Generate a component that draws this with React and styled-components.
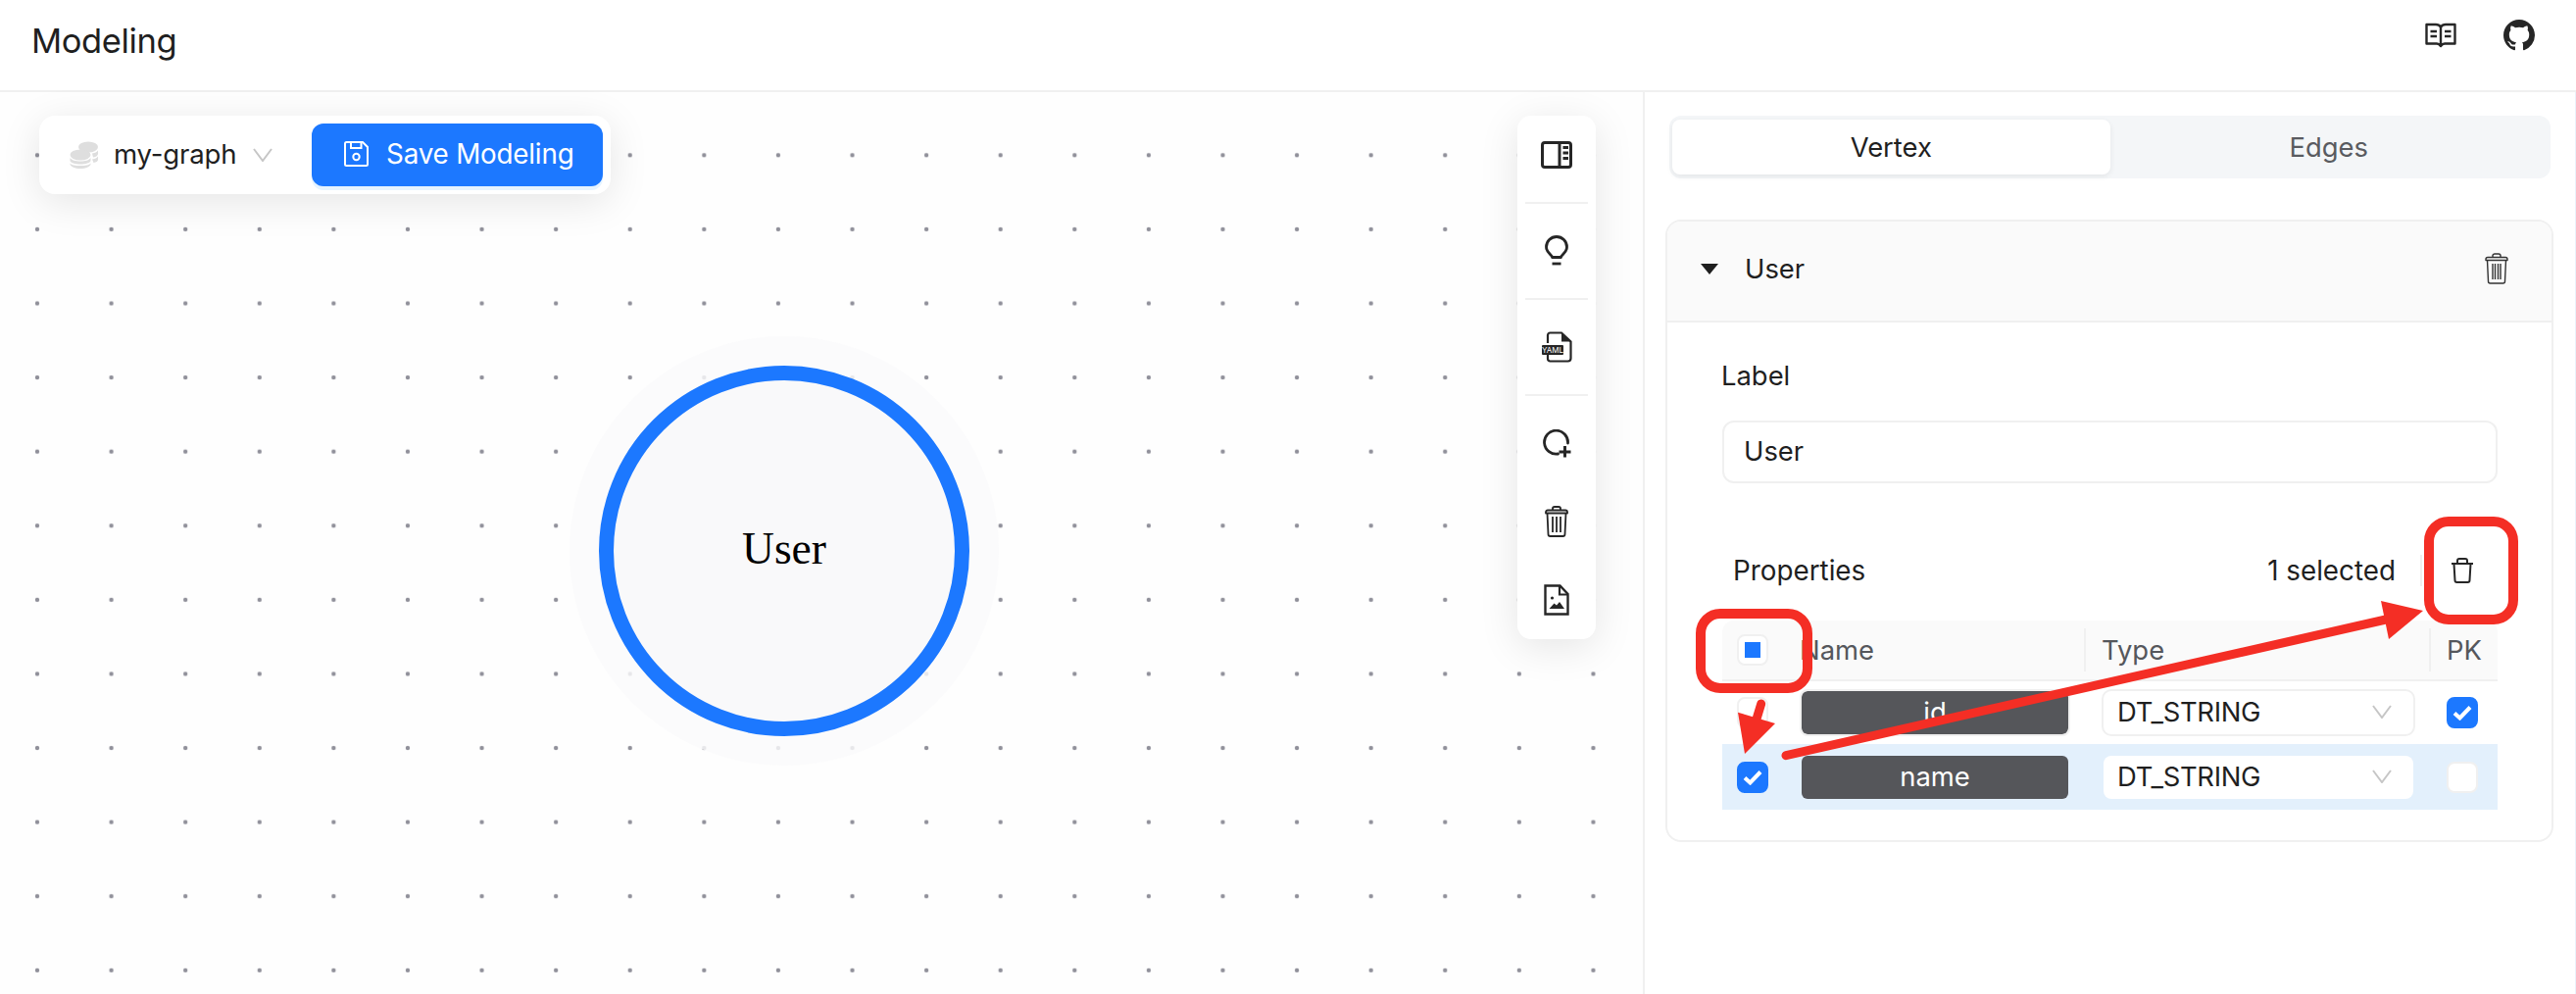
import React from "react";
import styled, { createGlobalStyle } from "styled-components";
import { BsGithub } from "react-icons/bs";

const BLUE = "#1c78ff";
const LINE = "#f0f0f0";
const RED = "#f42e25";

const Global = createGlobalStyle`
  html, body { margin: 0; padding: 0; background: #fff; }
  body { font-family: Inter, "Noto Sans", sans-serif; color: #1f1f1f; }
  * { box-sizing: border-box; }
`;

const Page = styled.div`
  position: relative;
  width: 2628px;
  height: 1014px;
  overflow: hidden;
  display: flex;
  flex-direction: column;
`;
const Header = styled.header`
  height: 94px;
  flex: none;
  border-bottom: 2px solid ${LINE};
  display: flex;
  align-items: flex-start;
  justify-content: space-between;
  padding: 0 42px 0 32px;
`;
const Title = styled.h1`
  margin: 22px 0 0;
  font-size: 34.5px;
  line-height: 40px;
  font-weight: 400;
  letter-spacing: -0.4px;
`;
const HeaderIcons = styled.div`
  display: flex;
  align-items: center;
  gap: 48px;
  height: 72px;
`;
const Main = styled.main`
  flex: 1;
  display: flex;
  min-height: 0;
`;
const Canvas = styled.section`
  position: relative;
  width: 1676px;
  flex: none;
  background-color: #fefefe;
  background-image: radial-gradient(circle at center, #90909a 0, #90909a 1.8px, transparent 2.6px);
  background-size: 75.6px 75.6px;
  background-position: 0.2px 26.5px;
`;
const FloatBar = styled.div`
  position: absolute;
  left: 40px;
  top: 24px;
  width: 583px;
  height: 80px;
  background: #fff;
  border-radius: 16px;
  box-shadow: 0 8px 40px rgba(0, 0, 0, 0.1);
  display: flex;
  align-items: center;
  padding: 0 8px 0 31px;
`;
const GraphName = styled.span`
  font-size: 27.6px;
  margin-left: 15px;
  letter-spacing: -0.2px;
  padding-bottom: 2px;
`;
const ChevronSlot = styled.span`
  margin-left: 17px;
  display: flex;
`;
const SaveButton = styled.button`
  margin-left: auto;
  width: 297px;
  height: 64px;
  border: 0;
  border-radius: 12px;
  background: ${BLUE};
  box-shadow: 0 4px 0 #e6f4ff;
  color: #fff;
  font: 400 27.8px Inter, sans-serif;
  letter-spacing: -0.2px;
  display: flex;
  align-items: center;
  padding: 0 0 2px 33px;
  gap: 18px;
`;
const SideTools = styled.div`
  position: absolute;
  right: 48px;
  top: 24px;
  width: 80px;
  background: #fff;
  border-radius: 14px;
  box-shadow: 0 8px 40px rgba(0, 0, 0, 0.1);
  display: flex;
  flex-direction: column;
  align-items: center;
`;
const ToolButton = styled.div`
  width: 80px;
  height: 80px;
  display: flex;
  align-items: center;
  justify-content: center;
`;
const ToolDivider = styled.div`
  width: 64px;
  height: 2px;
  margin: 8px 0;
  background: ${LINE};
`;
const Node = styled.div`
  position: absolute;
  left: 611px;
  top: 279px;
  width: 378px;
  height: 378px;
  border-radius: 50%;
  border: 15px solid ${BLUE};
  background: #f9f9fa;
  box-shadow: 0 0 0 30px rgba(250, 250, 251, 0.82);
  display: flex;
  align-items: center;
  justify-content: center;
  padding-bottom: 6px;
  font-family: "Liberation Serif", serif;
  font-size: 45.5px;
  color: #000;
`;
const Panel = styled.aside`
  flex: 1;
  border-left: 2px solid ${LINE};
  border-right: 1px solid #eaf2fb;
  padding: 24px 22px 0 21px;
`;
const Segmented = styled.div`
  margin: 0 3px 0 4px;
  height: 64px;
  padding: 4px 3px;
  border-radius: 12px;
  background: #f4f6f8;
  display: grid;
  grid-template-columns: 1fr 1fr;
`;
const Segment = styled.div`
  border-radius: 8px;
  display: flex;
  align-items: center;
  justify-content: center;
  font-size: 27.4px;
  color: ${(p) => (p.$active ? "#1f1f1f" : "#595b60")};
  background: ${(p) => (p.$active ? "#fff" : "transparent")};
  box-shadow: ${(p) => (p.$active ? "0 2px 6px rgba(0,0,0,0.07)" : "none")};
`;
const Card = styled.div`
  margin-top: 42px;
  border: 2px solid ${LINE};
  border-radius: 16px;
  overflow: hidden;
`;
const CardHead = styled.div`
  height: 103px;
  background: #fafafa;
  border-bottom: 2px solid ${LINE};
  display: flex;
  align-items: center;
  padding: 0 44px 5px 34px;
  font-size: 27.4px;
`;
const Caret = styled.span`
  width: 0;
  height: 0;
  border-left: 9px solid transparent;
  border-right: 9px solid transparent;
  border-top: 11px solid #1f1f1f;
  margin-right: 27px;
`;
const Push = styled.span`
  margin-left: auto;
  display: flex;
`;
const CardBody = styled.div`
  padding: 32px 55px 31px 56px;
`;
const FieldLabel = styled.div`
  font-size: 27.4px;
  line-height: 44px;
  margin-bottom: 24px;
  margin-left: -1px;
`;
const TextField = styled.div`
  height: 64px;
  border: 2px solid ${LINE};
  border-radius: 12px;
  padding: 0 0 2px 20px;
  display: flex;
  align-items: center;
  font-size: 27.4px;
`;
const PropBar = styled.div`
  margin-top: 65px;
  height: 50px;
  display: flex;
  align-items: center;
  padding: 0 24px 2px 11px;
  font-size: 27.8px;
`;
const Count = styled.span`
  margin-left: auto;
`;
const BarRule = styled.span`
  width: 2px;
  height: 32px;
  background: ${LINE};
  margin: 0 29px 0 25px;
`;
const Table = styled.div`
  margin-top: 25px;
  display: grid;
  grid-template-columns: 65px 306px 352px 68px;
`;
const HeadCell = styled.div`
  position: relative;
  height: 62px;
  background: #fafafa;
  border-bottom: 2px solid ${LINE};
  display: flex;
  align-items: center;
  padding-left: ${(p) => (p.$check ? "15px" : p.$tight ? "14px" : "16px")};
  font-size: 27.4px;
  color: #55575c;
  border-top-left-radius: ${(p) => (p.$first ? "12px" : "0")};
  border-top-right-radius: ${(p) => (p.$last ? "12px" : "0")};
  &::after {
    content: "";
    display: ${(p) => (p.$rule ? "block" : "none")};
    position: absolute;
    right: 0;
    top: 8px;
    width: 2px;
    height: 44px;
    background: ${LINE};
  }
`;
const Cell = styled.div`
  height: ${(p) => (p.$selected ? "67px" : "64px")};
  background: ${(p) => (p.$selected ? "#e3f0fc" : "#fff")};
  display: flex;
  align-items: center;
  padding-left: ${(p) => p.$pad || "16px"};
`;
const Check = styled.span`
  width: 32px;
  height: 32px;
  border-radius: 8px;
  border: 2px solid ${(p) => (p.$on ? BLUE : LINE)};
  background: ${(p) => (p.$on ? BLUE : "#fff")};
  display: flex;
  align-items: center;
  justify-content: center;
`;
const Indeterminate = styled.span`
  width: 16px;
  height: 16px;
  background: ${BLUE};
`;
const NameField = styled.div`
  width: 276px;
  height: 48px;
  border: 2px solid ${(p) => (p.$selected ? "transparent" : LINE)};
  border-radius: 8px;
  background: #55565a;
  background-clip: padding-box;
  color: #fff;
  display: flex;
  align-items: center;
  justify-content: center;
  font-size: 27.4px;
  padding-bottom: 2px;
`;
const TypeSelect = styled.div`
  width: 320px;
  height: 48px;
  border: 2px solid ${(p) => (p.$selected ? "transparent" : LINE)};
  border-radius: 10px;
  background: #fff;
  background-clip: padding-box;
  display: flex;
  align-items: center;
  justify-content: space-between;
  padding: 0 22px 2px 14px;
  font-size: 27.4px;
  letter-spacing: -0.3px;
`;
const Annotations = styled.svg`
  position: absolute;
  left: 0;
  top: 0;
  pointer-events: none;
`;

const Chevron = ({ w = 20, h = 14, c = "#c6c6c6" }) => (
  <svg width={w} height={h} viewBox="0 0 20 14" fill="none" preserveAspectRatio="none">
    <path d="M1 1 L10 13 L19 1" stroke={c} strokeWidth="2" />
  </svg>
);

const BookIcon = () => (
  <svg width="32" height="26" viewBox="0 0 32 26" fill="none" stroke="#262626" strokeWidth="2.4">
    <path d="M1.5 2 H11 C13.5 2 15 3 16 4.5 C17 3 18.500 2 21 2 H30.500 V21.500 H20 C18 21.500 17 22.500 16 24 C15 22.500 14 21.500 12 21.500 H1.500 Z" strokeLinejoin="round" />
    <path d="M16 4.500 V24" />
    <path d="M5.500 9 H12 M5.500 14 H12 M20 9 H26.500 M20 14 H26.500" />
  </svg>
);

const PanelIcon = () => (
  <svg width="32" height="28" viewBox="0 0 32 28" fill="none" stroke="#262626">
    <rect x="1.500" y="1.500" width="29" height="25" rx="2.500" strokeWidth="3" />
    <path d="M19 1.500 V26.500" strokeWidth="3" />
    <path d="M22.500 5 H28 V8 H22.500 Z M22.500 10.500 H28 V13.500 H22.500 Z M22.500 16 H28 V19 H22.500 Z" fill="#262626" stroke="none" />
  </svg>
);

const BulbIcon = () => (
  <svg width="24" height="32" viewBox="0 0 24 32" fill="none" stroke="#262626" strokeWidth="2.800">
    <path d="M7.500 22.500 C7.500 20 1.500 18 1.500 12 A10.500 10.500 0 0 1 22.500 12 C22.500 18 16.500 20 16.500 22.500 Z" strokeLinejoin="round" />
    <path d="M7.500 29 H16.500" strokeWidth="2.800" />
  </svg>
);

const YamlIcon = () => (
  <svg width="32" height="32" viewBox="0 0 32 32" fill="none">
    <path d="M7 12 V4 C7 2.500 8 1.500 9.500 1.500 H21 L30.500 10.500 V27.500 C30.500 29.500 29.500 30.500 27.500 30.500 H9.500 C8 30.500 7 29.500 7 28 V24" stroke="#262626" strokeWidth="2.200" />
    <path d="M21 1.500 V10.500 H30.500 Z" fill="#262626" />
    <rect x="1" y="14" width="22" height="10" rx="1" fill="#262626" />
    <text x="12" y="22" textAnchor="middle" fontFamily="Inter, sans-serif" fontSize="8" fill="#fff">YAML</text>
  </svg>
);

const NodeAddIcon = () => (
  <svg width="29" height="29" viewBox="0 0 29 29" fill="none" stroke="#262626" strokeWidth="2.800">
    <path d="M25.500 14 A12 12 0 1 0 15.500 25" strokeLinecap="round" />
    <path d="M22.500 17 V28.500 M16.500 23 H28.500" strokeWidth="3" />
  </svg>
);

const TrashIcon = ({ w = 24, h = 32, c = "#262626", lines = [8, 12, 16], sw = 1.800 }) => (
  <svg width={w} height={h} viewBox="0 0 24 32" fill="none" stroke={c} strokeWidth={sw} preserveAspectRatio="none">
    <path d="M1 6.500 C1 5 2 4.500 3 4.500 H21 C22 4.500 23 5 23 6.500 V7.500 H1 Z" strokeLinejoin="round" />
    <path d="M8 4.500 V2.800 C8 1.800 9 1 10 1 H14 C15 1 16 1.800 16 2.800 V4.500" />
    <path d="M2.500 7.500 L3.500 29 C3.500 30.200 4.500 31 5.500 31 H18.500 C19.500 31 20.500 30.200 20.500 29 L21.500 7.500" />
    {lines.map((x) => (
      <path key={x} d={`M${x} 11 V27`} />
    ))}
  </svg>
);

const SmallTrash = () => (
  <svg width="24" height="26" viewBox="0 0 24 26" fill="none" stroke="#262626" strokeWidth="2">
    <path d="M1 6 H23" />
    <path d="M7 6 V3 C7 2 8 1 9 1 H15 C16 1 17 2 17 3 V6" />
    <path d="M3.500 6 L4.500 23 C4.500 24.200 5.500 25 6.500 25 H17.500 C18.500 25 19.500 24.200 19.500 23 L20.500 6" />
  </svg>
);

const ImageFileIcon = () => (
  <svg width="26" height="32" viewBox="0 0 26 32" fill="none">
    <path d="M1.500 1.500 H16.500 L24.500 10 V30.500 H1.500 Z" stroke="#262626" strokeWidth="2.400" />
    <path d="M16 1.500 V10.500 H24.500" stroke="#262626" strokeWidth="2.200" />
    <circle cx="8.500" cy="14" r="1.600" fill="#262626" />
    <path d="M5.500 25 L10.500 19.500 L13 21.500 L16 18 L21 25 Z" fill="#262626" />
  </svg>
);

const DbIcon = () => (
  <svg width="30" height="28" viewBox="0 0 30 28" fill="#dedede">
    <ellipse cx="19" cy="6" rx="10" ry="5.500" />
    <path d="M23 12.500 C26 12 28 11 29 9.500 V13 C29 14.500 27 16 24 16.500 Z" />
    <path d="M23 18.500 C26 18 28 17 29 15.500 V19 C29 20.500 27 21.500 24.500 22 Z" />
    <ellipse cx="11" cy="14" rx="10.500" ry="5.500" />
    <path d="M0.500 17 C2 19.500 6 20.500 11 20.500 C16 20.500 20 19.500 21.500 17 V20 C21 22 16.500 23.500 11 23.500 C5.500 23.500 1 22 0.500 20 Z" />
    <path d="M0.500 22.500 C2 24.500 6 25 11 25 C16 25 20 24.500 21.500 22.500 V23.500 C21 26 16.500 28 11 28 C5.500 28 1 26 0.500 23.500 Z" />
  </svg>
);

const SaveIcon = () => (
  <svg width="25" height="26" viewBox="0 0 25 26" fill="none" stroke="#fff" strokeWidth="2">
    <path d="M1 2.500 C1 1.500 1.500 1 2.500 1 H19 L24 6 V23.500 C24 24.500 23.500 25 22.500 25 H2.500 C1.500 25 1 24.500 1 23.500 Z" />
    <path d="M7 1 V7 H17.500 V1" />
    <circle cx="12.500" cy="16" r="3.200" />
  </svg>
);

const Tick = () => (
  <svg width="20" height="16" viewBox="0 0 20 16" fill="none">
    <path d="M2 8.500 L7.500 13.500 L18 2.500" stroke="#fff" strokeWidth="4" />
  </svg>
);

export default function App() {
  return (
    <Page>
      <Global />
      <Header>
        <Title>Modeling</Title>
        <HeaderIcons>
          <BookIcon />
          <BsGithub size={32} color="#262626" />
        </HeaderIcons>
      </Header>
      <Main>
        <Canvas>
          <FloatBar>
            <DbIcon />
            <GraphName>my-graph</GraphName>
            <ChevronSlot>
              <Chevron />
            </ChevronSlot>
            <SaveButton>
              <SaveIcon />
              Save Modeling
            </SaveButton>
          </FloatBar>
          <SideTools>
            <ToolButton><PanelIcon /></ToolButton>
            <ToolDivider />
            <ToolButton><BulbIcon /></ToolButton>
            <ToolDivider />
            <ToolButton><YamlIcon /></ToolButton>
            <ToolDivider />
            <ToolButton><NodeAddIcon /></ToolButton>
            <ToolButton><TrashIcon /></ToolButton>
            <ToolButton><ImageFileIcon /></ToolButton>
          </SideTools>
          <Node>User</Node>
        </Canvas>
        <Panel>
          <Segmented>
            <Segment $active>Vertex</Segment>
            <Segment>Edges</Segment>
          </Segmented>
          <Card>
            <CardHead>
              <Caret />
              User
              <Push>
                <TrashIcon lines={[8, 10.500, 13.500, 16]} sw={1.400} c="#333" />
              </Push>
            </CardHead>
            <CardBody>
              <FieldLabel>Label</FieldLabel>
              <TextField>User</TextField>
              <PropBar>
                Properties
                <Count>1 selected</Count>
                <BarRule />
                <SmallTrash />
              </PropBar>
              <Table>
                <HeadCell $check $first><Check><Indeterminate /></Check></HeadCell>
                <HeadCell $rule $tight>Name</HeadCell>
                <HeadCell $rule>Type</HeadCell>
                <HeadCell $last>PK</HeadCell>

                <Cell $pad="15px"><Check /></Cell>
                <Cell $pad="14px"><NameField>id</NameField></Cell>
                <Cell><TypeSelect>DT_STRING<Chevron /></TypeSelect></Cell>
                <Cell><Check $on><Tick /></Check></Cell>

                <Cell $selected $pad="15px"><Check $on><Tick /></Check></Cell>
                <Cell $selected $pad="14px"><NameField $selected>name</NameField></Cell>
                <Cell $selected><TypeSelect $selected>DT_STRING<Chevron /></TypeSelect></Cell>
                <Cell $selected><Check /></Cell>
              </Table>
            </CardBody>
          </Card>
        </Panel>
      </Main>
      <Annotations width="2628" height="1014" viewBox="0 0 2628 1014" fill="none">
        <rect x="1735" y="626" width="109" height="76" rx="20" stroke={RED} strokeWidth="10" />
        <rect x="2478" y="532" width="86" height="100" rx="20" stroke={RED} strokeWidth="10" />
        <path d="M1822 770.700 L2434 632" stroke={RED} strokeWidth="9" strokeLinecap="round" />
        <path d="M2472 623 L2429 613 L2437 652 Z" fill={RED} />
        <path d="M1796.700 718 L1790 740" stroke={RED} strokeWidth="9" strokeLinecap="round" />
        <path d="M1780 769 L1773 726.700 L1811 738 Z" fill={RED} />
      </Annotations>
    </Page>
  );
}
